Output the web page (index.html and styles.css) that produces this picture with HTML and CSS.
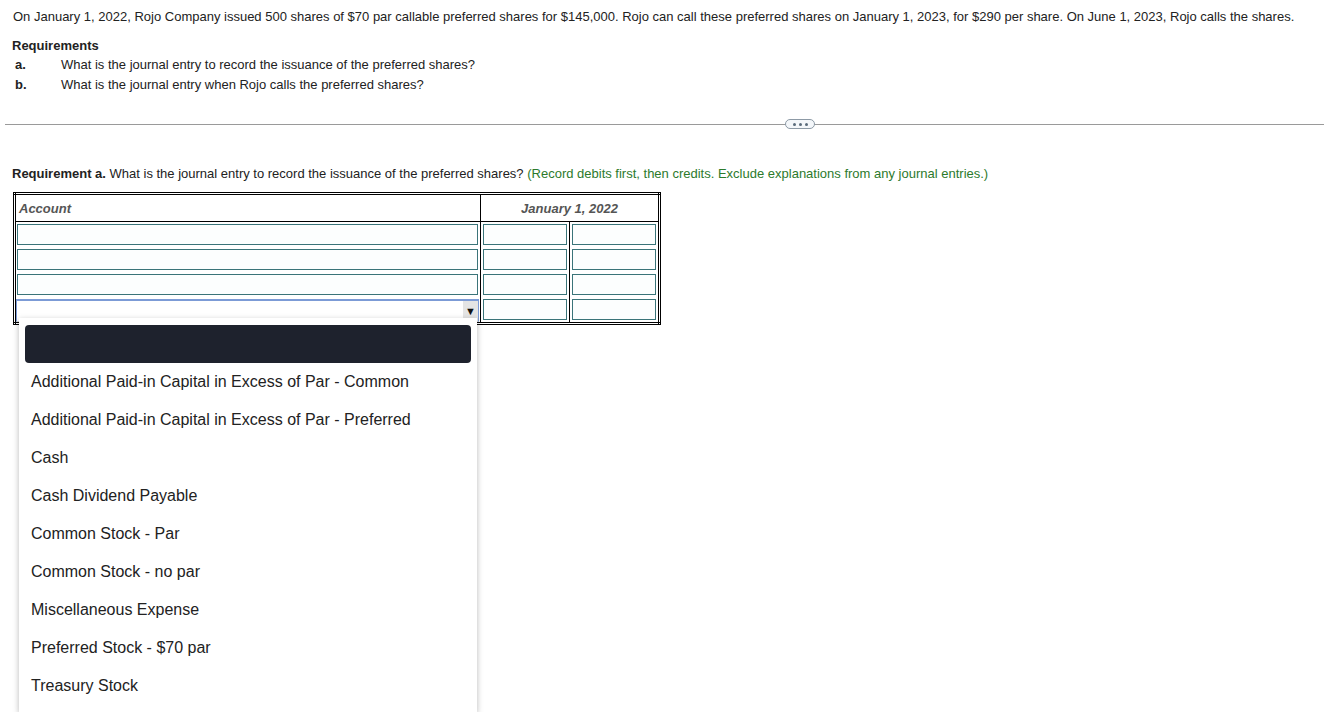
FILE: index.html
```html
<!DOCTYPE html>
<html lang="en">
<head>
    <meta charset="UTF-8">
    <title>Journal Entry - Preferred Shares</title>
    <link rel="stylesheet" href="styles.css">
</head>
<body>
    <div class="page">
        <p class="intro">On January 1, 2022, Rojo Company issued 500 shares of $70 par callable preferred shares for $145,000. Rojo can call these preferred shares on January 1, 2023, for $290 per share. On June 1, 2023, Rojo calls the shares.</p>

        <div class="reqs">
            <div class="reqs-title">Requirements</div>
            <div class="req-row"><span class="req-letter">a.</span><span>What is the journal entry to record the issuance of the preferred shares?</span></div>
            <div class="req-row"><span class="req-letter">b.</span><span>What is the journal entry when Rojo calls the preferred shares?</span></div>
        </div>

        <div class="divider">
            <span class="pill"><i></i><i></i><i></i></span>
        </div>

        <p class="question"><b>Requirement a.</b> What is the journal entry to record the issuance of the preferred shares? <span class="hint">(Record debits first, then credits. Exclude explanations from any journal entries.)</span></p>

        <div class="journal-wrap">
            <table class="journal">
                <thead>
                    <tr>
                        <th class="col-account">Account</th>
                        <th colspan="2" class="col-date">January 1, 2022</th>
                    </tr>
                </thead>
                <tbody>
                    <tr>
                        <td class="cell-account"><input class="field"></td>
                        <td class="cell-amt"><input class="field"></td>
                        <td class="cell-amt"><input class="field"></td>
                    </tr>
                    <tr>
                        <td class="cell-account"><input class="field"></td>
                        <td class="cell-amt"><input class="field"></td>
                        <td class="cell-amt"><input class="field"></td>
                    </tr>
                    <tr>
                        <td class="cell-account"><input class="field"></td>
                        <td class="cell-amt"><input class="field"></td>
                        <td class="cell-amt"><input class="field"></td>
                    </tr>
                    <tr>
                        <td class="cell-account">
                            <div class="select-box"><span class="arrow">&#9660;</span></div>
                        </td>
                        <td class="cell-amt"><input class="field"></td>
                        <td class="cell-amt"><input class="field"></td>
                    </tr>
                </tbody>
            </table>

            <div class="account-list">
                <div class="opt opt-active">&nbsp;</div>
                <div class="opt">Additional Paid-in Capital in Excess of Par - Common</div>
                <div class="opt">Additional Paid-in Capital in Excess of Par - Preferred</div>
                <div class="opt">Cash</div>
                <div class="opt">Cash Dividend Payable</div>
                <div class="opt">Common Stock - Par</div>
                <div class="opt">Common Stock - no par</div>
                <div class="opt">Miscellaneous Expense</div>
                <div class="opt">Preferred Stock - $70 par</div>
                <div class="opt">Treasury Stock</div>
            </div>
        </div>
    </div>
</body>
</html>
```

FILE: styles.css
```css
body {
    margin: 0;
    font-family: "Liberation Sans", Arial, sans-serif;
    font-size: 13px;
    color: #222;
    background: #fff;
}
.page {
    padding: 0 12px;
}
.intro {
    margin: 9px 0 0 1px;
    line-height: 16px;
}
.reqs {
    margin-top: 13px;
}
.reqs-title {
    font-weight: bold;
    line-height: 16px;
    margin-bottom: 1px;
}
.req-row {
    display: flex;
    line-height: 20px;
}
.req-letter {
    width: 46px;
    padding-left: 3px;
    font-weight: bold;
}
.divider {
    position: relative;
    margin: 29px -7px 0 -7px;
    height: 1px;
    background: #9a9a9a;
}
.pill {
    position: absolute;
    left: 780px;
    top: -5px;
    width: 28px;
    height: 8px;
    border: 1px solid #8d9aa6;
    border-radius: 5px;
    background: #f4f7fa;
    display: flex;
    justify-content: center;
    align-items: center;
    gap: 3px;
}
.pill i {
    width: 3px;
    height: 3px;
    background: #5a6b7b;
    border-radius: 50%;
}
.question {
    margin: 41px 0 0 0;
    line-height: 16px;
}
.hint {
    color: #2c7a2c;
}
.journal-wrap {
    margin-top: 10px;
    margin-left: 1px;
}
.journal {
    border: 3px double #000;
    border-collapse: collapse;
    width: 648px;
}
.journal th {
    height: 26px;
    padding: 0 3px;
    font-style: italic;
    font-weight: bold;
    color: #555;
    border-bottom: 1px solid #000;
}
.col-account {
    text-align: left;
    width: 458px;
    border-right: 1px solid #000;
}
.col-date {
    text-align: center;
}
.journal td {
    padding: 2px;
    height: 21px;
}
.journal td.cell-account {
    padding-left: 1px;
    border-right: 1px solid #000;
}
.cell-amt + .cell-amt {
    border-left: 1px solid #000;
}
.field {
    display: block;
    box-sizing: border-box;
    width: 100%;
    height: 21px;
    margin: 0;
    border: 1px solid #3a7479;
    background: #fcfefe;
    padding: 0;
}
.select-box {
    box-sizing: border-box;
    height: 23px;
    margin: 0 -1px -2px -1px;
    border: 1px solid #7c9bd6;
    border-top: 2px solid #7c9bd6;
    border-bottom: 1px solid #dcdcdc;
    background: #fff;
    display: flex;
    justify-content: flex-end;
}
.arrow {
    width: 15px;
    background: #e4e4e4;
    color: #111;
    font-size: 11px;
    text-align: center;
    line-height: 20px;
}
.account-list {
    position: relative;
    z-index: 10;
    margin: -7px 0 0 6px;
    width: 446px;
    padding: 7px 6px 7px 6px;
    background: #fff;
    box-shadow: 0 2px 6px rgba(0, 0, 0, 0.28);
    font-size: 16px;
    color: #222;
}
.opt {
    height: 38px;
    line-height: 38px;
    padding-left: 6px;
}
.opt-active {
    background: #1e222d;
    border-radius: 4px;
}
```
